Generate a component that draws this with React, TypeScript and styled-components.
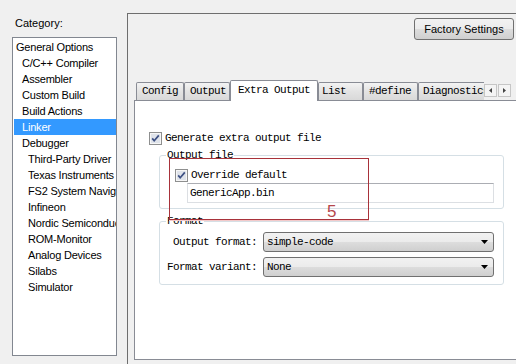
import React from 'react';
import styled, { createGlobalStyle } from 'styled-components';

const GlobalStyle = createGlobalStyle`
  html, body {
    margin: 0;
    padding: 0;
    background: #f0f0f0;
  }
  body {
    font-family: "Liberation Sans", Arial, sans-serif;
    color: #000;
  }
`;

const mono = `"Liberation Mono", "DejaVu Sans Mono", monospace`;

const Window = styled.div`
  width: 516px;
  height: 364px;
  overflow: hidden;
  background: #f0f0f0;
  display: grid;
  grid-template-columns: 127px 1fr;
`;

/* left side: category tree */

const Sidebar = styled.div`
  padding: 15px 0 0 12px;
  display: flex;
  flex-direction: column;
`;

const CategoryLabel = styled.div`
  font-size: 11px;
  line-height: 16px;
  height: 16px;
  padding-left: 3px;
  margin-bottom: 6px;
`;

const CategoryList = styled.ul`
  list-style: none;
  margin: 0;
  width: 105px;
  height: 319px;
  box-sizing: border-box;
  border: 1px solid #828790;
  background: #fff;
  padding: 1px 0 1px 1px;
  overflow: hidden;
`;

const CategoryItem = styled.li<{ $level: number; $selected?: boolean }>`
  height: 16px;
  line-height: 16px;
  font-size: 11px;
  letter-spacing: -0.2px;
  white-space: nowrap;
  overflow: hidden;
  padding-left: ${p => 2 + p.$level * 6}px;
  background: ${p => (p.$selected ? '#3399ff' : 'transparent')};
  color: ${p => (p.$selected ? '#fff' : '#000')};
`;

/* right side: option pages */

const Panel = styled.div`
  margin-top: 13px;
  border-top: 1px solid #6e6e6e;
  border-left: 1px solid #6e6e6e;
  padding: 4px 0 0 6px;
  display: flex;
  flex-direction: column;
  min-width: 0;
`;

const FactoryButton = styled.button`
  align-self: flex-end;
  margin-right: 2px;
  width: 100px;
  height: 22px;
  padding: 0;
  border: 1px solid #707070;
  border-radius: 3px;
  background: linear-gradient(#f2f2f2 0%, #ebebeb 50%, #dddddd 50%, #cfcfcf 100%);
  font-family: "Liberation Sans", Arial, sans-serif;
  font-size: 11px;
  color: #000;
`;

const TabStrip = styled.div`
  margin-top: 40px;
  margin-bottom: -1px;
  height: 21px;
  padding-left: 2px;
  display: flex;
  align-items: flex-end;
  position: relative;
  z-index: 1;
`;

const TabViewport = styled.div`
  width: 348px;
  height: 21px;
  display: flex;
  align-items: flex-end;
  overflow: hidden;
  flex: none;
`;

const Tab = styled.div<{ $w: number; $pad: number; $active?: boolean }>`
  flex: none;
  box-sizing: border-box;
  width: ${p => p.$w}px;
  height: ${p => (p.$active ? 21 : 18)}px;
  margin-bottom: ${p => (p.$active ? 0 : 1)}px;
  padding-left: ${p => p.$pad}px;
  border: 1px solid #898c95;
  border-bottom: none;
  border-radius: 2px 2px 0 0;
  background: ${p => (p.$active ? '#fff' : 'linear-gradient(#f3f3f3, #e3e3e3 50%, #d9d9d9)')};
  font-family: ${mono};
  font-size: 11px;
  letter-spacing: -0.6px;
  line-height: ${p => (p.$active ? 18 : 17)}px;
  white-space: nowrap;
  overflow: hidden;
`;

const ScrollButtons = styled.div`
  display: flex;
  gap: 1px;
  margin: 0 0 4px 0;
`;

const ScrollButton = styled.div`
  width: 13px;
  height: 13px;
  box-sizing: border-box;
  border: 1px solid #c6c6c6;
  background: #f4f4f4;
  display: flex;
  align-items: center;
  justify-content: center;
`;

const Page = styled.div`
  position: relative;
  height: 260px;
  box-sizing: border-box;
  margin-right: -20px;
  border: 1px solid #898c95;
  background: #fff;
  font-family: ${mono};
  font-size: 11px;
  letter-spacing: -0.6px;
`;

const CheckRow = styled.label<{ $h: number; $ml: number; $mt: number }>`
  display: flex;
  align-items: center;
  gap: 3px;
  height: ${p => p.$h}px;
  margin: ${p => p.$mt}px 0 0 ${p => p.$ml}px;
  white-space: nowrap;
`;

const Group = styled.fieldset<{ $mt: number }>`
  margin: ${p => p.$mt}px 0 0 24px;
  width: 345px;
  min-width: 0;
  box-sizing: border-box;
  border: 1px solid #d5dfe5;
  border-radius: 3px;
  padding: 0;
`;

const Legend = styled.legend`
  margin-left: 6px;
  padding: 0 1px;
  line-height: 12px;
  height: 12px;
`;

const GroupBody = styled.div<{ $pt: number; $pb: number; $pl: number }>`
  padding: ${p => p.$pt}px 9px ${p => p.$pb}px ${p => p.$pl}px;
`;

const TextField = styled.div`
  margin: 1px 0 0 12px;
  height: 20px;
  box-sizing: border-box;
  border: 1px solid #dcdfe3;
  border-top-color: #abadb3;
  padding-left: 2px;
  line-height: 18px;
  background: #fff;
`;

const FormGrid = styled.div`
  display: grid;
  grid-template-columns: 90px 1fr;
  column-gap: 6px;
  row-gap: 5px;
  align-items: center;
`;

const FieldLabel = styled.div`
  text-align: right;
  white-space: nowrap;
`;

const Select = styled.div`
  height: 20px;
  box-sizing: border-box;
  border: 1px solid #707070;
  border-radius: 3px;
  background: linear-gradient(#f2f2f2 0%, #ebebeb 50%, #dddddd 50%, #cfcfcf 100%);
  display: flex;
  align-items: center;
  justify-content: space-between;
  padding: 0 5px 0 3px;
`;

const Annotation = styled.div`
  position: absolute;
  left: 34px;
  top: 57px;
  width: 200px;
  height: 62px;
  box-sizing: border-box;
  border: 1px solid #a8323a;
  box-shadow: 0 1px 0 #f3c9c9;
  pointer-events: none;
`;

const AnnotationNumber = styled.span`
  position: absolute;
  left: 157px;
  top: 44px;
  font-family: "Liberation Sans", Arial, sans-serif;
  font-size: 17px;
  line-height: 17px;
  letter-spacing: 0;
  color: #b5474b;
`;

const CheckBox = () => (
  <svg width="13" height="13" viewBox="0 0 13 13" style={{ flex: 'none' }}>
    <rect x="0.5" y="0.5" width="12" height="12" fill="#f6f6f6" stroke="#8e8f8f" />
    <rect x="2" y="2" width="9" height="9" fill="#dfe3ea" />
    <path d="M3.2 6.4 L5.2 8.8 L9.8 3.4" fill="none" stroke="#3c4f83" strokeWidth="1.7" />
  </svg>
);

const DropArrow = () => (
  <svg width="7" height="4" viewBox="0 0 7 4">
    <path d="M0 0 H7 L3.5 4 Z" fill="#000" />
  </svg>
);

const categories = [
  { name: 'General Options', level: 0 },
  { name: 'C/C++ Compiler', level: 1 },
  { name: 'Assembler', level: 1 },
  { name: 'Custom Build', level: 1 },
  { name: 'Build Actions', level: 1 },
  { name: 'Linker', level: 1, selected: true },
  { name: 'Debugger', level: 1 },
  { name: 'Third-Party Driver', level: 2 },
  { name: 'Texas Instruments', level: 2 },
  { name: 'FS2 System Navigator', level: 2 },
  { name: 'Infineon', level: 2 },
  { name: 'Nordic Semiconductor', level: 2 },
  { name: 'ROM-Monitor', level: 2 },
  { name: 'Analog Devices', level: 2 },
  { name: 'Silabs', level: 2 },
  { name: 'Simulator', level: 2 },
];

const tabs = [
  { name: 'Config', w: 48, pad: 5 },
  { name: 'Output', w: 46, pad: 5 },
  { name: 'Extra Output', w: 88, pad: 7, active: true },
  { name: 'List', w: 45, pad: 3 },
  { name: '#define', w: 55, pad: 5 },
  { name: 'Diagnostics', w: 70, pad: 4 },
];

const App = () => {
  return (
    <Window>
      <GlobalStyle />
      <Sidebar>
        <CategoryLabel>Category:</CategoryLabel>
        <CategoryList>
          {categories.map(c => (
            <CategoryItem key={c.name} $level={c.level} $selected={c.selected}>
              {c.name}
            </CategoryItem>
          ))}
        </CategoryList>
      </Sidebar>

      <Panel>
        <FactoryButton>Factory Settings</FactoryButton>

        <TabStrip>
          <TabViewport>
            {tabs.map(t => (
              <Tab key={t.name} $w={t.w} $pad={t.pad} $active={t.active}>
                {t.name}
              </Tab>
            ))}
          </TabViewport>
          <ScrollButtons>
            <ScrollButton>
              <svg width="3" height="5" viewBox="0 0 3 5"><path d="M3 0 V5 L0 2.5 Z" fill="#444" /></svg>
            </ScrollButton>
            <ScrollButton>
              <svg width="3" height="5" viewBox="0 0 3 5"><path d="M0 0 V5 L3 2.5 Z" fill="#444" /></svg>
            </ScrollButton>
          </ScrollButtons>
        </TabStrip>

        <Page>
          <CheckRow $h={16} $ml={14} $mt={29}>
            <CheckBox />
            Generate extra output file
          </CheckRow>

          <Group $mt={3}>
            <Legend>Output file</Legend>
            <GroupBody $pt={7} $pb={5} $pl={15}>
              <CheckRow $h={14} $ml={0} $mt={0}>
                <CheckBox />
                Override default
              </CheckRow>
              <TextField>GenericApp.bin</TextField>
            </GroupBody>
          </Group>

          <Group $mt={6}>
            <Legend>Format</Legend>
            <GroupBody $pt={5} $pb={7} $pl={7}>
              <FormGrid>
                <FieldLabel>Output format:</FieldLabel>
                <Select>
                  simple-code
                  <DropArrow />
                </Select>
                <FieldLabel>Format variant:</FieldLabel>
                <Select>
                  None
                  <DropArrow />
                </Select>
              </FormGrid>
            </GroupBody>
          </Group>

          <Annotation>
            <AnnotationNumber>5</AnnotationNumber>
          </Annotation>
        </Page>
      </Panel>
    </Window>
  );
};

export default App;
